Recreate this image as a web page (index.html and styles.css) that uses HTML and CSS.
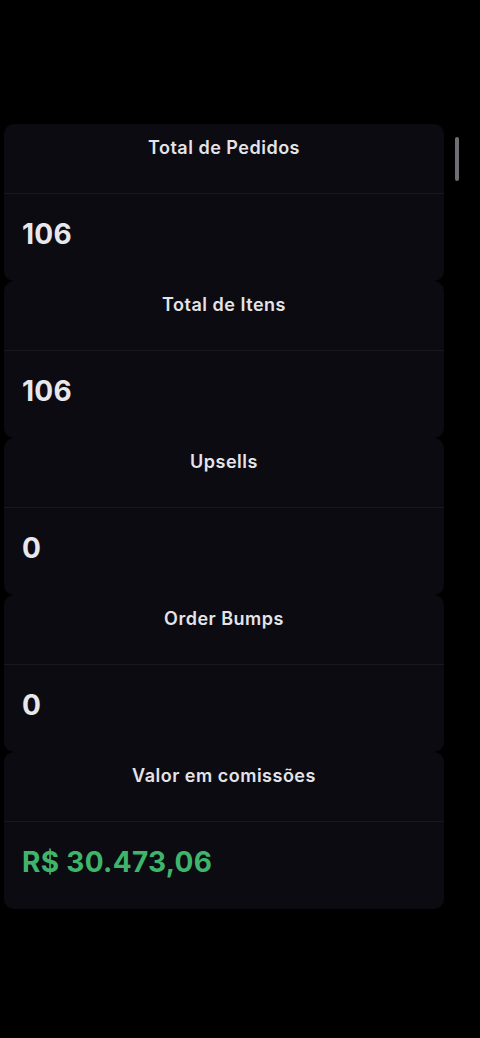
FILE: index.html
```html
<!DOCTYPE html>
<html lang="pt-BR">
<head>
<meta charset="utf-8">
<link rel="stylesheet" href="styles.css">
</head>
<body>
<div class="screen">
  <div class="list">
    <section class="card">
      <div class="card-head">Total de Pedidos</div>
      <div class="card-body">106</div>
    </section>
    <section class="card">
      <div class="card-head">Total de Itens</div>
      <div class="card-body">106</div>
    </section>
    <section class="card">
      <div class="card-head">Upsells</div>
      <div class="card-body">0</div>
    </section>
    <section class="card">
      <div class="card-head">Order Bumps</div>
      <div class="card-body">0</div>
    </section>
    <section class="card">
      <div class="card-head">Valor em comissões</div>
      <div class="card-body money">R$ 30.473,06</div>
    </section>
  </div>
  <div class="scrollbar"></div>
</div>
</body>
</html>
```

FILE: styles.css
```css
html, body {
  margin: 0;
  padding: 0;
  background: #000;
}
body {
  font-family: Inter, "Liberation Sans", sans-serif;
  color: #e6e6ea;
}
.screen {
  position: relative;
  width: 480px;
  height: 1038px;
  padding-top: 124px;
  box-sizing: border-box;
}
.list {
  width: 440px;
  margin-left: 4px;
  display: flex;
  flex-direction: column;
}
.card {
  background: #0c0b12;
  border-radius: 10px;
  height: 157px;
  display: flex;
  flex-direction: column;
}
.card-head {
  height: 70px;
  border-bottom: 1px solid #19181f;
  text-align: center;
  font-size: 18px;
  font-weight: 600;
  letter-spacing: 0.5px;
  line-height: 22px;
  padding-top: 13px;
  box-sizing: border-box;
  color: #e4e4e8;
}
.card-body {
  flex: 1;
  display: flex;
  align-items: center;
  padding-left: 18px;
  font-size: 28px;
  font-weight: 700;
  letter-spacing: 0.3px;
  color: #e8e8ec;
  padding-bottom: 8px;
}
.money {
  color: #3fb56c;
}
.scrollbar {
  position: absolute;
  left: 455px;
  top: 137px;
  width: 4px;
  height: 44px;
  border-radius: 2px;
  background: #6e6e74;
}
```
